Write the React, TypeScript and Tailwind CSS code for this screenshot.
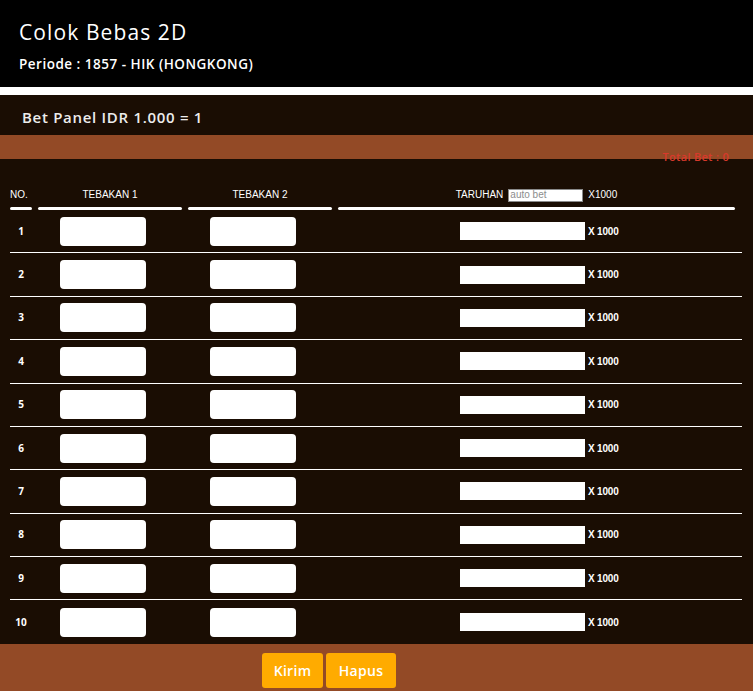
import { useState } from "react";

const rows = Array.from({ length: 10 }, (_, i) => i + 1);

export default function App() {
  const [autoBet, setAutoBet] = useState("");

  return (
    <div className="min-h-[691px] w-full bg-[#1a0d03] font-['Open_Sans','Lato',sans-serif] text-white">
      {/* header */}
      <div className="h-[87px] bg-black px-[19px] pt-[18px]">
        <h1 className="text-[21px] leading-[28px] tracking-[1.1px]">Colok Bebas 2D</h1>
        <p className="mt-[9px] text-[13.5px] font-semibold leading-[18px] tracking-[0.5px]">
          Periode : 1857 - HIK (HONGKONG)
        </p>
      </div>
      <div className="h-2 bg-white" />

      <div className="flex h-[40px] items-center px-[22px] pt-[4px]">
        <span className="text-[15px] font-semibold tracking-[0.7px] text-[#ececec]">
          Bet Panel IDR 1.000 = 1
        </span>
      </div>
      <div className="h-[24px] bg-[#934a26]" />

      <div className="-mt-[9px] pr-[24px] text-right text-[11px] font-semibold leading-[14px] tracking-[0.3px] text-[#d8392b]">
        Total Bet : 0
      </div>

      {/* table head */}
      <div className="mt-[24px] flex gap-[6px] pl-[10px] pr-[18px] font-['Liberation_Sans',Arial,sans-serif] text-[10px]">
        <div className="w-[22px]">
          <div className="h-[14px] leading-[14px]">NO.</div>
          <div className="mt-[5px] h-[3px] rounded-full bg-white" />
        </div>
        <div className="w-[144px]">
          <div className="h-[14px] text-center leading-[14px]">TEBAKAN 1</div>
          <div className="mt-[5px] h-[3px] rounded-full bg-white" />
        </div>
        <div className="w-[144px]">
          <div className="h-[14px] text-center leading-[14px]">TEBAKAN 2</div>
          <div className="mt-[5px] h-[3px] rounded-full bg-white" />
        </div>
        <div className="flex-1">
          <div className="flex h-[14px] items-center justify-center gap-[5px] leading-[14px]">
            <span>TARUHAN</span>
            <input
              value={autoBet}
              onChange={(e) => setAutoBet(e.target.value)}
              placeholder="auto bet"
              className="h-[13px] w-[75px] border border-[#8a8a8a] bg-white px-[1px] text-[10px] text-black placeholder:text-[#8d8d8d] outline-none"
            />
            <span>X1000</span>
          </div>
          <div className="mt-[5px] h-[3px] rounded-full bg-white" />
        </div>
      </div>

      {/* rows */}
      <div className="pl-[10px] pr-[11px]">
        {rows.map((n) => (
          <div
            key={n}
            className={`flex h-[43.375px] items-center gap-[6px] ${n < 10 ? "border-b border-white" : ""}`}
          >
            <div className="w-[22px] text-center text-[10px] font-bold">{n}</div>
            <div className="w-[144px] pl-[22px]">
              <input className="block h-[29px] w-[86px] rounded-[4px] bg-white text-black outline-none" />
            </div>
            <div className="w-[144px] pl-[22px]">
              <input className="block h-[29px] w-[86px] rounded-[4px] bg-white text-black outline-none" />
            </div>
            <div className="flex flex-1 items-center pl-[122px]">
              <input className="block h-[18px] w-[125px] bg-white text-black outline-none" />
              <span className="ml-[3px] font-['Liberation_Sans',Arial,sans-serif] text-[10px] font-bold tracking-[-0.2px]">
                X 1000
              </span>
            </div>
          </div>
        ))}
      </div>

      {/* footer */}
      <div className="flex h-[49px] gap-[3px] bg-[#934a26] pl-[262px] pt-[9px]">
        <button className="h-[35px] w-[61px] rounded-[3px] bg-[#ffab00] text-[14px] font-semibold tracking-[0.3px]">
          Kirim
        </button>
        <button className="h-[35px] w-[70px] rounded-[3px] bg-[#ffab00] text-[14px] font-semibold tracking-[0.3px]">
          Hapus
        </button>
      </div>
    </div>
  );
}
